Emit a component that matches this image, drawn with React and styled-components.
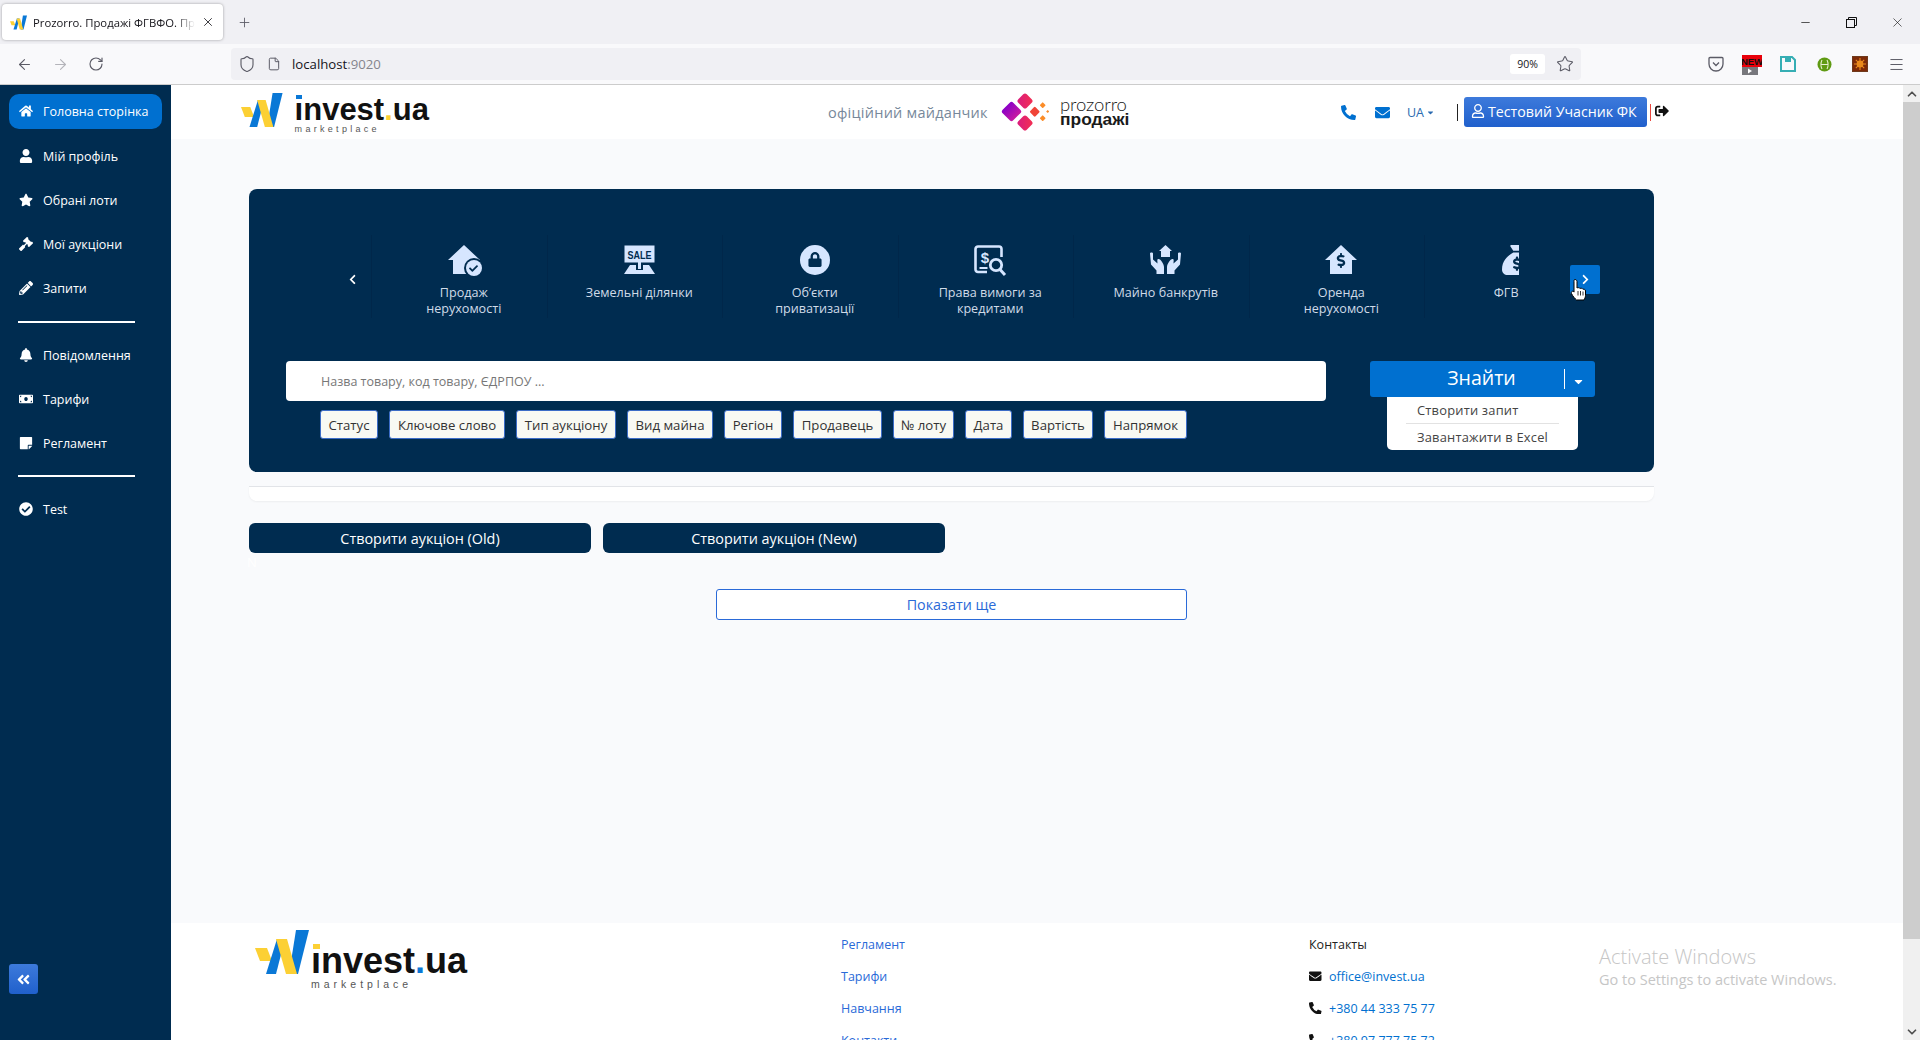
import React from "react";
import styled, { createGlobalStyle } from "styled-components";
import { ArrowLeft, ArrowRight, RotateCw, Shield, File, Star, Minus, X, Plus, Menu, ChevronUp, ChevronDown } from "lucide-react";
import {
  FaHome, FaUser, FaStar, FaGavel, FaPencilAlt, FaBell, FaMoneyBill, FaStickyNote, FaCheckCircle,
  FaEnvelope, FaRegUser, FaSignOutAlt, FaChevronLeft, FaChevronRight, FaAngleDoubleLeft, FaLock,
  FaPhoneAlt, FaDollarSign, FaCheck, FaCaretDown,
} from "react-icons/fa";
import { FaSackDollar } from "react-icons/fa6";

const NAVY = "#002c50";
const BLUE = "#0070d0";
const LINK = "#2a6ad8";
const ICON = "#d6e6ff";

const Global = createGlobalStyle`
  html, body { margin: 0; padding: 0; height: 100%; overflow: hidden; background: #f9fafc; }
  body { font-family: "Open Sans", "Noto Sans", sans-serif; }
  * { box-sizing: border-box; }
`;

const Page = styled.div`
  height: 1040px; width: 1920px; display: flex; flex-direction: column; overflow: hidden; position: relative;
`;
const TabStrip = styled.div`
  height: 44px; background: #f0f0f4; display: flex; align-items: flex-start; flex: none;
`;
const Tab = styled.div`
  margin: 4px 0 0 2px; width: 221px; height: 36px; background: #fff; border-radius: 4px;
  box-shadow: 0 0 3px rgba(0,0,0,.35); display: flex; align-items: center; padding: 0 8px 0 8px; gap: 6px;
`;
const TabTitle = styled.span`
  flex: 1; font-size: 11.3px; color: #15141a; white-space: nowrap; overflow: hidden;
  -webkit-mask-image: linear-gradient(to right, #000 88%, transparent);
  mask-image: linear-gradient(to right, #000 88%, transparent);
`;
const NewTab = styled.div`
  margin: 12px 0 0 11px; width: 20px; height: 20px; display: flex; align-items: center; justify-content: center; color: #5b5b66;
`;
const WindowControls = styled.div`
  margin-left: auto; display: flex;
`;
const WindowBtn = styled.div`
  width: 46px; height: 44px; display: flex; align-items: center; justify-content: center; color: #111;
`;
const NavBar = styled.div`
  height: 41px; flex: none; background: #f9f9fb; border-bottom: 1px solid #ccc; display: flex; align-items: flex-start; padding-left: 6px;
`;
const NavBtn = styled.div`
  width: 36px; height: 40px; display: flex; align-items: center; justify-content: center;
  color: ${p => (p.$off ? "#b4b4ba" : "#5b5b66")};
`;
const UrlBar = styled.div`
  margin: 4px 0 0 117px; width: 1350px; height: 32px; background: #f0f0f4; border-radius: 4px;
  display: flex; align-items: center; padding: 0 7px 0 7px; color: #5b5b66;
`;
const UrlText = styled.span`
  margin-left: 11px; font-size: 13.2px; color: #15141a;
  span { color: #85858c; }
`;
const UrlFile = styled.span`
  margin-left: 11px; display: flex;
`;
const ZoomBox = styled.span`
  margin-left: auto; width: 35px; height: 20px; background: #fff; border-radius: 3px; font-size: 10.5px; color: #15141a;
  display: flex; align-items: center; justify-content: center;
`;
const StarBox = styled.span`
  margin-left: 11px; display: flex;
`;
const Tools = styled.div`
  margin-left: 117px; display: flex;
`;
const ToolSlot = styled.div`
  width: 36px; height: 40px; display: flex; align-items: center; justify-content: center; color: #5b5b66;
`;

const Viewport = styled.div`
  flex: 1; min-height: 0; display: flex;
`;
const Sidebar = styled.aside`
  width: 171px; flex: none; background: ${NAVY}; display: flex; flex-direction: column; padding: 4px 0 46px;
`;
const SideItem = styled.div`
  height: 44px; margin: 0 9px ${p => (p.$first ? "1px" : "0")}; display: flex; align-items: center;
`;
const SideLink = styled.a`
  width: 100%; height: 35px; border-radius: 10px; display: flex; align-items: center; padding-left: 8px; gap: 8px;
  font-size: 12.5px; color: #fff; white-space: nowrap; background: ${p => (p.$active ? BLUE : "transparent")};
`;
const SideIcon = styled.span`
  width: 18px; display: flex; justify-content: center; font-size: 14px;
`;
const SideRule = styled.hr`
  width: 117px; height: 2px; margin: ${p => p.$top || 10}px 0 10px 18px; border: 0; background: #fff;
`;
const Collapse = styled.button`
  margin: auto 0 0 9px; width: 29px; height: 30px; border: 0; border-radius: 3px; padding: 0; color: #fff; font-size: 15px;
  background: linear-gradient(#3d7adb, #2060cc); display: flex; align-items: center; justify-content: center;
`;

const Main = styled.main`
  flex: 1; min-width: 0; display: flex; flex-direction: column; overflow: hidden;
`;
const Header = styled.header`
  height: 54px; flex: none; background: #fff; display: flex; align-items: center; padding-left: 70px;
`;
const LogoWrap = styled.div`
  display: flex; align-items: flex-start; width: ${p => p.$w}px; flex: none;
`;
const LogoText = styled.div`
  margin: ${p => p.$top}px 0 0 ${p => p.$gap}px; display: flex; flex-direction: column;
`;
const Wordmark = styled.div`
  font-family: "Liberation Sans", Arial, sans-serif; font-weight: 700; color: #111; white-space: nowrap;
  font-size: ${p => p.$size}px; line-height: ${p => p.$lh}px;
  em { font-style: normal; color: ${p => p.$dot}; }
`;
const Dotless = styled.span`
  position: relative;
  &::before {
    content: ""; position: absolute; left: 15%; width: 70%; top: ${p => p.$top}px; height: ${p => p.$h}px; background: ${p => p.$c};
  }
`;
const Market = styled.div`
  font-family: "Liberation Sans", Arial, sans-serif; color: #555; white-space: nowrap;
  font-size: ${p => p.$size}px; letter-spacing: ${p => p.$ls}px; line-height: ${p => p.$lh}px;
`;
const Official = styled.span`
  margin-left: 399px; width: 173px; flex: none; font-size: 14.5px; letter-spacing: .25px; color: #77889a; white-space: nowrap;
`;
const ProzorroBox = styled.div`
  display: flex; align-items: center; gap: 11px; flex: none;
`;
const ProzorroText = styled.div`
  display: flex; flex-direction: column; color: #1a1a1a; font-family: "Lato", sans-serif; line-height: 15px; width: 70px;
  b { font-weight: 700; font-size: 17.4px; font-family: "Liberation Sans", sans-serif; }
  span { font-weight: 300; font-size: 18.5px; letter-spacing: -.1px; }
`;
const HeaderIcon = styled.a`
  display: flex; color: ${BLUE}; font-size: 15px; margin-left: ${p => p.$ml}px;
`;
const Lang = styled.a`
  margin-left: 17px; color: #2a6ab0; font-size: 12.5px; display: flex; align-items: center; gap: 2px;
`;
const VBar = styled.span`
  width: 1px; height: 17px; background: ${p => p.$c}; margin: 0 ${p => p.$mr}px 0 ${p => p.$ml}px;
`;
const UserBtn = styled.button`
  width: 183px; height: 30px; border: 0; border-radius: 3px; color: #fff; padding: 0 0 2px 7px; font: inherit; font-size: 14.2px;
  background: linear-gradient(#3d7adb, #2060cc); display: flex; align-items: center; gap: 3px; white-space: nowrap; flex: none;
`;
const Logout = styled.span`
  display: flex; font-size: 14px; color: #111; margin: -2px 0 0 1px;
`;

const Content = styled.div`
  flex: 1; min-height: 0; padding: 50px 0 0 78px; display: flex; flex-direction: column; align-items: flex-start;
`;
const Hero = styled.section`
  width: 1405px; height: 283px; background: ${NAVY}; border-radius: 8px; padding-top: 46px; flex: none;
`;
const Carousel = styled.div`
  display: flex; align-items: center; height: 83px;
`;
const PrevBtn = styled.div`
  margin: 6px 8px 0 93px; width: 20px; display: flex; justify-content: center; color: #fff; font-size: 11px;
`;
const Slides = styled.div`
  width: 1148px; height: 83px; display: flex; overflow: hidden; flex: none; margin-left: 1px;
`;
const Slide = styled.div`
  width: 175.5px; flex: none; height: 83px; padding: 10px 6px 0 15px; border-left: 1px solid #00274a;
  display: flex; flex-direction: column; align-items: center; text-align: center;
`;
const SlideIcon = styled.div`
  height: 33px; display: flex; align-items: flex-start; justify-content: center; color: ${ICON}; position: relative; flex: none;
`;
const SlideText = styled.div`
  margin-top: 7px; font-size: 12.6px; line-height: 16.2px; color: #d0dbe8; white-space: pre-line;
`;
const Clip = styled.div`
  white-space: nowrap; margin-left: 2px;
`;
const CheckBadge = styled.span`
  position: absolute; right: -2px; top: 15px; width: 16px; height: 16px; border-radius: 50%; background: ${ICON};
  box-shadow: 0 0 0 2px ${NAVY}; color: ${NAVY}; display: flex; align-items: center; justify-content: center; font-size: 9px;
`;
const RoofBadge = styled.span`
  position: absolute; left: 50%; top: ${p => p.$top}px; transform: translateX(-50%); color: ${p => p.$c}; display: flex; font-size: ${p => p.$size}px;
`;
const NextBtn = styled.div`
  position: relative; margin: 6px 0 0 51px; width: 30px; height: 29px; background: ${BLUE}; border-radius: 2px; color: #fff;
  font-size: 11px; display: flex; align-items: center; justify-content: center;
  padding-left: 1px;
`;
const Hand = styled.svg`
  position: absolute; left: 0; top: 13px;
`;
const SearchRow = styled.div`
  margin-top: 43px; padding-left: 37px; display: flex; align-items: flex-start;
`;
const SearchCol = styled.div`
  width: 1040px;
`;
const SearchBox = styled.div`
  height: 40px; background: #fff; border-radius: 4px; display: flex; align-items: center; padding-left: 35px;
  font-size: 12.5px; color: #777;
`;
const Chips = styled.div`
  margin: 9px 0 0 34px; display: flex; gap: 11px;
`;
const Chip = styled.button`
  height: 29px; padding: 0; width: ${p => p.$w}px; flex: none; font: inherit; font-size: 13.2px; color: #333; background: #f8f9f3;
  border: 1px solid #3b6cc7; border-radius: 3px; white-space: nowrap;
`;
const FindWrap = styled.div`
  margin-left: 44px; position: relative; width: 225px;
`;
const FindBtn = styled.button`
  width: 225px; height: 36px; border: 0; border-radius: 3px; background: ${BLUE}; color: #fff; padding: 0; font: inherit;
  display: flex; align-items: center;
`;
const FindLabel = styled.span`
  width: 194px; padding: 0 0 3px 29px; text-align: center; font-size: 19.5px;
`;
const FindSplit = styled.span`
  width: 1px; height: 20px; background: #fff;
`;
const FindCaret = styled.span`
  width: 26px; display: flex; justify-content: center; font-size: 13px; margin-top: 5px;
`;
const Dropdown = styled.div`
  position: absolute; left: 17px; top: 36px; width: 191px; height: 53px; background: #fff; border-radius: 0 0 5px 5px;
  padding: 2px 19px 0; font-size: 12.9px; letter-spacing: .2px; color: #444;
`;
const DropItem = styled.div`
  height: 24px; line-height: 23px; padding-left: 11px; white-space: nowrap;
  & + & { border-top: 1px solid #e2e2e2; height: 27px; line-height: 27px; }
`;
const Strip = styled.div`
  margin-top: 14px; width: 1405px; height: 15px; background: #fff; border-top: 1px solid #e2e4e8;
  border-radius: 0 0 8px 8px; box-shadow: 0 1px 2px rgba(0,0,0,.05); flex: none;
`;
const CreateRow = styled.div`
  margin-top: 22px; display: flex; gap: 12px;
`;
const CreateBtn = styled.button`
  width: 342px; height: 30px; border: 0; border-radius: 6px; background: ${NAVY}; color: #fff; font: inherit; font-size: 14.4px; padding: 0;
`;
const Ghost = styled.div`
  margin: 0 0 18px -2px; height: 18px; line-height: 18px; color: #fff; font-size: 13px;
`;
const ShowMore = styled.button`
  margin-left: 467px; width: 471px; height: 31px; border: 1px solid ${LINK}; border-radius: 3px; background: #fff; color: ${LINK};
  font: inherit; font-size: 14.3px; padding: 0;
`;

const Footer = styled.footer`
  height: 117px; flex: none; background: #fff; overflow: hidden; display: flex; padding: 5px 0 0 84px;
`;
const FootLogo = styled.div`
  margin-top: 2px; flex: none;
`;
const FootLinks = styled.div`
  margin-left: 373px; width: 468px; flex: none;
`;
const FootRow = styled.div`
  height: 32px; display: flex; align-items: center; gap: 7px; font-size: 12.5px; white-space: nowrap;
  color: ${p => (p.$dark ? "#222" : p.$c || LINK)};
`;
const FootIcon = styled.span`
  display: flex; width: 13px; color: #111; font-size: 12.5px;
`;
const Scrollbar = styled.div`
  width: 17px; flex: none; background: #f0f0f0; display: flex; flex-direction: column; align-items: center; color: #505050;
`;
const ScrollEnd = styled.div`
  height: 17px; display: flex; align-items: center; justify-content: center; margin-top: ${p => (p.$end ? "auto" : "0")};
`;
const Thumb = styled.div`
  width: 17px; height: 837px; background: #cdcdcd;
`;
const Activate = styled.div`
  position: absolute; left: 1599px; top: 944px; color: #c6c6c6; font-family: "Open Sans", sans-serif; pointer-events: none; white-space: nowrap;
`;
const ActivateTitle = styled.div`
  font-size: 20px; line-height: 26px; font-weight: 300;
`;
const ActivateSub = styled.div`
  font-size: 14.5px; line-height: 20px;
`;

const WMark = ({ w, h }) => (
  <svg width={w} height={h} viewBox="0 0 54 44">
    <polygon points="0,18 12,18 17,31 5,31" fill="#fcd034" />
    <polygon points="22,9 30,9 21,44 11,44" fill="#0a78d6" />
    <polygon points="41,0 54,0 43,44 34,44" fill="#0a78d6" />
    <polygon points="21,9 32,9 42,44 31,44" fill="#fcd034" />
  </svg>
);

const ProzorroMark = () => (
  <svg width="48" height="38" viewBox="0 0 48 38">
    <defs>
      <linearGradient id="pp" x1="0" x2="1" y1="0" y2="0"><stop offset="0" stopColor="#8a00c8" /><stop offset="1" stopColor="#c81aa0" /></linearGradient>
      <linearGradient id="pk" x1="0" x2="1" y1="1" y2="0"><stop offset="0" stopColor="#d81b80" /><stop offset="1" stopColor="#f43050" /></linearGradient>
    </defs>
    <rect x="3" y="11" width="15" height="15" rx="2.5" transform="rotate(45 10.5 18.5)" fill="url(#pp)" />
    <rect x="18" y="2" width="12" height="12" rx="2.5" transform="rotate(45 24 8)" fill="url(#pk)" />
    <rect x="18" y="24" width="12" height="12" rx="2.5" transform="rotate(45 24 30)" fill="url(#pk)" />
    <rect x="30" y="15" width="7.5" height="7.5" rx="1.2" transform="rotate(45 33.75 18.75)" fill="#f04438" />
    <rect x="39.5" y="10" width="4.4" height="4.4" rx=".8" transform="rotate(45 41.7 12.2)" fill="#fb8c28" />
    <rect x="39.5" y="23" width="4.4" height="4.4" rx=".8" transform="rotate(45 41.7 25.2)" fill="#fb8c28" />
    <rect x="45.6" y="17.4" width="2.2" height="2.2" transform="rotate(45 46.7 18.5)" fill="#fb8c28" />
  </svg>
);

const HouseSvg = () => (
  <svg width="32" height="30" viewBox="0 0 32 30">
    <path d="M16 0 32 15H27V29H5V15H0Z" fill={ICON} />
  </svg>
);

const SaleIcon = () => (
  <svg width="31" height="29" viewBox="0 0 31 29">
    <rect x="0.5" y="0.5" width="30" height="17" fill={ICON} />
    <text x="15.5" y="13.5" textAnchor="middle" textLength="24" lengthAdjust="spacingAndGlyphs" fontFamily="Liberation Sans, sans-serif" fontWeight="700" fontSize="11.5" fill={NAVY}>SALE</text>
    <rect x="14" y="17" width="3" height="7" fill={ICON} />
    <path d="M6 20h6v5h7v-5h6l6 9H0Z" fill={ICON} />
  </svg>
);

const ClaimsIcon = () => (
  <svg width="33" height="32" viewBox="0 0 33 32" fill="none">
    <path d="M13 27H4a2.5 2.5 0 0 1-2.5-2.5V4A2.5 2.5 0 0 1 4 1.5h21A2.5 2.5 0 0 1 27.500 4v8" stroke={ICON} strokeWidth="2.6" />
    <text x="11" y="18" textAnchor="middle" fontFamily="Liberation Sans, sans-serif" fontWeight="700" fontSize="15" fill={ICON}>$</text>
    <rect x="5.500" y="22" width="8" height="2" fill={ICON} />
    <circle cx="22" cy="20" r="5.700" stroke={ICON} strokeWidth="2.800" />
    <path d="M26 24.500 31 30" stroke={ICON} strokeWidth="3" />
  </svg>
);

const HandsIcon = () => (
  <svg width="31" height="29" viewBox="0 0 31 29">
    <path d="M15.500 0 22 6h-2v6h-9V6H9Z" fill={ICON} />
    <g fill={ICON}>
      <path d="M0 8.500c0-1.200 3-1.200 3 0v6l4.500 4c0-2.500-.8-4.500 1-4.500 2.200 0 5.500 5.200 5.500 8v7H6.500v-3.500L1 19.500Z" />
      <path d="M31 8.500c0-1.200-3-1.200-3 0v6l-4.500 4c0-2.500.8-4.500-1-4.500-2.200 0-5.500 5.200-5.500 8v7h7.500v-3.500L30 19.500Z" />
    </g>
  </svg>
);

const HandCursor = () => (
  <Hand width="18" height="24" viewBox="0 0 18 24">
    <path d="M5 1.500c1.100 0 2 .9 2 2V10c.6-.5 2.600-.5 3 .5.700-.5 2.500-.3 3 .8.800-.3 2.500 0 2.500 1.700v4.500c0 1.800-.8 3-1.500 4.500H6.500C5.500 21 2.800 18.500 1.500 15.500c-.6-1.400.3-2.300 1.300-2.300.6 0 1.200.4 1.200.9V3.500c0-1.100 0-2 1-2Z" fill="#fff" stroke="#000" strokeWidth="1" />
    <path d="M8 13v4.500M10.500 13v4.500M13 13.500v4" stroke="#000" strokeWidth=".8" />
  </Hand>
);

const sideTop = [
  [FaHome, "Головна сторінка", true],
  [FaUser, "Мій профіль"],
  [FaStar, "Обрані лоти"],
  [FaGavel, "Мої аукціони"],
  [FaPencilAlt, "Запити"],
];
const sideMid = [
  [FaBell, "Повідомлення"],
  [FaMoneyBill, "Тарифи"],
  [FaStickyNote, "Регламент"],
];
const chips = [
  ["Статус", 58], ["Ключове слово", 116], ["Тип аукціону", 100], ["Вид майна", 86], ["Регіон", 58],
  ["Продавець", 89], ["№ лоту", 61], ["Дата", 47], ["Вартість", 70], ["Напрямок", 83],
];

const SideEntry = ({ icon: Icon, label, active, first }) => (
  <SideItem $first={first}>
    <SideLink $active={active}>
      <SideIcon><Icon /></SideIcon>
      {label}
    </SideLink>
  </SideItem>
);

export default function App() {
  return (
    <Page>
      <Global />
      <TabStrip>
        <Tab>
          <WMark w={17} h={15} />
          <TabTitle>Prozorro. Продажі ФГВФО. Прозорро</TabTitle>
          <X size={14} strokeWidth={1.4} color="#15141a" />
        </Tab>
        <NewTab><Plus size={15} strokeWidth={1.4} /></NewTab>
        <WindowControls>
          <WindowBtn><Minus size={13} strokeWidth={1.3} /></WindowBtn>
          <WindowBtn>
            <svg width="11" height="11" viewBox="0 0 11 11" fill="none" stroke="#111"><rect x=".5" y="2.500" width="8" height="8" /><path d="M2.500 2.500V.5h8v8H8.500" /></svg>
          </WindowBtn>
          <WindowBtn><X size={15} strokeWidth={1} /></WindowBtn>
        </WindowControls>
      </TabStrip>
      <NavBar>
        <NavBtn><ArrowLeft size={17} strokeWidth={1.5} /></NavBtn>
        <NavBtn $off><ArrowRight size={17} strokeWidth={1.5} /></NavBtn>
        <NavBtn><RotateCw size={16} strokeWidth={1.7} /></NavBtn>
        <UrlBar>
          <Shield size={18} strokeWidth={1.5} />
          <UrlFile><File size={14} strokeWidth={1.7} /></UrlFile>
          <UrlText>localhost<span>:9020</span></UrlText>
          <ZoomBox>90%</ZoomBox>
          <StarBox><Star size={18} strokeWidth={1.4} /></StarBox>
        </UrlBar>
        <Tools>
          <ToolSlot>
            <svg width="16" height="16" viewBox="0 0 16 16" fill="none" stroke="#5b5b66" strokeWidth="1.300"><path d="M2 1.500h12a1 1 0 0 1 1 1V8a7 7 0 0 1-14 0V2.500a1 1 0 0 1 1-1Z" /><path d="m5 6.500 3 3 3-3" /></svg>
          </ToolSlot>
          <ToolSlot>
            <svg width="20" height="24" viewBox="0 0 20 24">
              <rect x="0" y="3" width="20" height="12" fill="#e8000a" />
              <text x="10" y="13" textAnchor="middle" fontFamily="Liberation Sans, sans-serif" fontWeight="700" fontSize="9.500" fill="#111">NEW</text>
              <rect x="0" y="15" width="16" height="8" fill="#77777c" />
              <path d="M6 16.500v5l4-2.500Z" fill="#fff" />
            </svg>
          </ToolSlot>
          <ToolSlot>
            <svg width="16" height="16" viewBox="0 0 16 16" fill="none"><path d="M1 1h11l3 3v11H1Z" stroke="#36aeb4" strokeWidth="2" /><rect x="5" y="1" width="6" height="5" fill="#36aeb4" /></svg>
          </ToolSlot>
          <ToolSlot>
            <svg width="15" height="15" viewBox="0 0 15 15"><circle cx="7.500" cy="7.500" r="7" fill="#5f9a12" /><path d="M5 3c-1.500 3-1.500 6 0 9M10 3c1.500 3 1.500 6 0 9M4 7.500h7" fill="none" stroke="#e6efd0" strokeWidth="1.100" /></svg>
          </ToolSlot>
          <ToolSlot>
            <svg width="16" height="16" viewBox="0 0 16 16"><rect width="16" height="16" fill="#6f3a1c" /><rect x="1" y="1" width="14" height="14" fill="#7d2a08" /><circle cx="8" cy="8" r="3.400" fill="#e98a1c" /><path d="M8 2v12M2 8h12M3.800 3.800l8.400 8.400M12.200 3.800l-8.400 8.400" stroke="#e98a1c" strokeWidth="1.100" /></svg>
          </ToolSlot>
          <ToolSlot><Menu size={17} strokeWidth={1.4} /></ToolSlot>
        </Tools>
      </NavBar>
      <Viewport>
        <Sidebar>
          {sideTop.map(([I, l, a]) => <SideEntry key={l} icon={I} label={l} active={a} first={a} />)}
          <SideRule $top={11} />
          {sideMid.map(([I, l]) => <SideEntry key={l} icon={I} label={l} />)}
          <SideRule />
          <SideEntry icon={FaCheckCircle} label="Test" />
          <Collapse><FaAngleDoubleLeft /></Collapse>
        </Sidebar>
        <Main>
          <Header>
            <LogoWrap $w={188}>
              <WMark w={45} h={38} />
              <LogoText $gap={12} $top={4}>
                <Wordmark $size={31} $lh={30} $dot="#fcd034">
                  <Dotless $c="#0a78d6" $top={3} $h={4}>ı</Dotless>nvest<em>.</em>ua
                </Wordmark>
                <Market $size={9} $ls={3.3} $lh={9}>marketplace</Market>
              </LogoText>
            </LogoWrap>
            <Official>офіційний майданчик</Official>
            <ProzorroBox>
              <ProzorroMark />
              <ProzorroText>
                <span>prozorro</span>
                <b>продажі</b>
              </ProzorroText>
            </ProzorroBox>
            <HeaderIcon $ml={211}><FaPhoneAlt /></HeaderIcon>
            <HeaderIcon $ml={19}><FaEnvelope /></HeaderIcon>
            <Lang>UA<FaCaretDown size={9} /></Lang>
            <VBar $c="#222" $ml={22} $mr={6} />
            <UserBtn><FaRegUser size={14} />Тестовий Учасник ФК</UserBtn>
            <VBar $c="#e8473f" $ml={3} $mr={3} />
            <Logout><FaSignOutAlt /></Logout>
          </Header>
          <Content>
            <Hero>
              <Carousel>
                <PrevBtn><FaChevronLeft /></PrevBtn>
                <Slides>
                  <Slide>
                    <SlideIcon>
                      <HouseSvg />
                      <CheckBadge><FaCheck /></CheckBadge>
                    </SlideIcon>
                    <SlideText>{"Продаж\nнерухомості"}</SlideText>
                  </Slide>
                  <Slide>
                    <SlideIcon><SaleIcon /></SlideIcon>
                    <SlideText>Земельні ділянки</SlideText>
                  </Slide>
                  <Slide>
                    <SlideIcon>
                      <svg width="30" height="30" viewBox="0 0 30 30"><circle cx="15" cy="15" r="15" fill={ICON} /></svg>
                      <RoofBadge $top={7} $c={NAVY} $size={15}><FaLock /></RoofBadge>
                    </SlideIcon>
                    <SlideText>{"Об’єкти\nприватизації"}</SlideText>
                  </Slide>
                  <Slide>
                    <SlideIcon><ClaimsIcon /></SlideIcon>
                    <SlideText>{"Права вимоги за\nкредитами"}</SlideText>
                  </Slide>
                  <Slide>
                    <SlideIcon><HandsIcon /></SlideIcon>
                    <SlideText>Майно банкрутів</SlideText>
                  </Slide>
                  <Slide>
                    <SlideIcon>
                      <HouseSvg />
                      <RoofBadge $top={8} $c={NAVY} $size={15}><FaDollarSign /></RoofBadge>
                    </SlideIcon>
                    <SlideText>{"Оренда\nнерухомості"}</SlideText>
                  </Slide>
                  <Slide>
                    <SlideIcon><FaSackDollar size={30} /></SlideIcon>
                    <SlideText><Clip>ФГВ ФО</Clip></SlideText>
                  </Slide>
                </Slides>
                <NextBtn>
                  <FaChevronRight />
                  <HandCursor />
                </NextBtn>
              </Carousel>
              <SearchRow>
                <SearchCol>
                  <SearchBox>Назва товару, код товару, ЄДРПОУ ...</SearchBox>
                  <Chips>
                    {chips.map(([l, w]) => <Chip key={l} $w={w}>{l}</Chip>)}
                  </Chips>
                </SearchCol>
                <FindWrap>
                  <FindBtn>
                    <FindLabel>Знайти</FindLabel>
                    <FindSplit />
                    <FindCaret><FaCaretDown /></FindCaret>
                  </FindBtn>
                  <Dropdown>
                    <DropItem>Створити запит</DropItem>
                    <DropItem>Завантажити в Excel</DropItem>
                  </Dropdown>
                </FindWrap>
              </SearchRow>
            </Hero>
            <Strip />
            <CreateRow>
              <CreateBtn>Створити аукціон (Old)</CreateBtn>
              <CreateBtn>Створити аукціон (New)</CreateBtn>
            </CreateRow>
            <Ghost>N</Ghost>
            <ShowMore>Показати ще</ShowMore>
          </Content>
          <Footer>
            <LogoWrap $w={213}>
              <FootLogo><WMark w={54} h={44} /></FootLogo>
              <LogoText $gap={2} $top={15}>
                <Wordmark $size={36} $lh={35} $dot="#0a78d6">
                  <Dotless $c="#fcd034" $top={4} $h={5}>ı</Dotless>nvest<em>.</em>ua
                </Wordmark>
                <Market $size={10.5} $ls={4} $lh={12}>marketplace</Market>
              </LogoText>
            </LogoWrap>
            <FootLinks>
              <FootRow>Регламент</FootRow>
              <FootRow>Тарифи</FootRow>
              <FootRow>Навчання</FootRow>
              <FootRow>Контакти</FootRow>
            </FootLinks>
            <div>
              <FootRow $dark>Контакты</FootRow>
              <FootRow $c={BLUE}><FootIcon><FaEnvelope /></FootIcon>office@invest.ua</FootRow>
              <FootRow $c={BLUE}><FootIcon><FaPhoneAlt /></FootIcon>+380 44 333 75 77</FootRow>
              <FootRow $c={BLUE}><FootIcon><FaPhoneAlt /></FootIcon>+380 97 777 75 72</FootRow>
            </div>
          </Footer>
        </Main>
        <Scrollbar>
          <ScrollEnd><ChevronUp size={14} strokeWidth={3} /></ScrollEnd>
          <Thumb />
          <ScrollEnd $end><ChevronDown size={14} strokeWidth={3} /></ScrollEnd>
        </Scrollbar>
      </Viewport>
      <Activate>
        <ActivateTitle>Activate Windows</ActivateTitle>
        <ActivateSub>Go to Settings to activate Windows.</ActivateSub>
      </Activate>
    </Page>
  );
}
